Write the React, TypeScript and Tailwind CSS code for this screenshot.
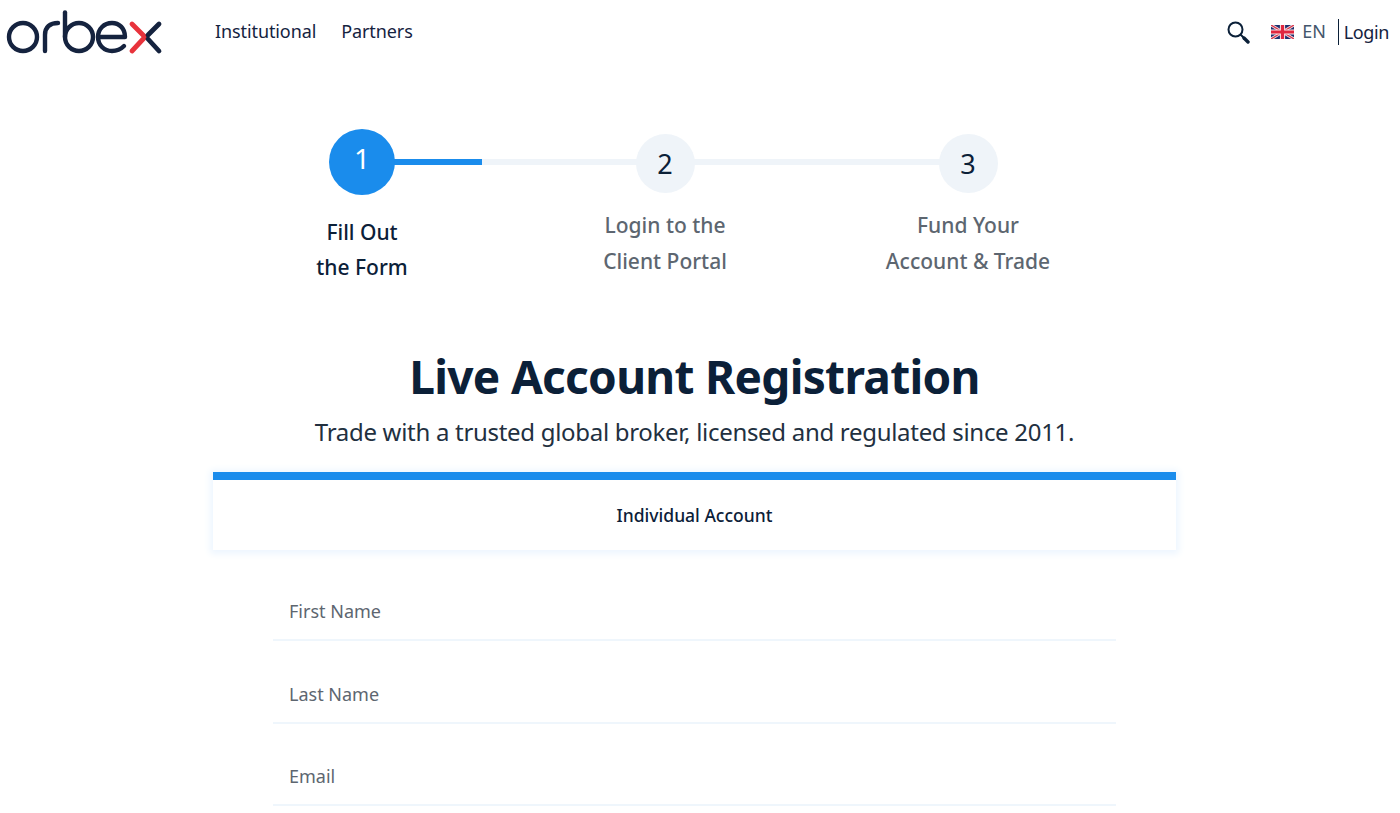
const font = { fontFamily: '"Noto Sans", sans-serif' };

function Logo() {
  return (
    <svg width="170" height="63" viewBox="0 0 170 63" fill="none" strokeWidth="4.4" strokeLinecap="round" strokeLinejoin="round">
      <circle cx="23" cy="37" r="14" stroke="#15233f" />
      <path d="M45 51V35C45 27 50 23 58 23" stroke="#15233f" />
      <path d="M65 12.5V37" stroke="#15233f" />
      <circle cx="79" cy="37" r="14" stroke="#15233f" />
      <path d="M99 37H125M125 37C125 28 119 23 112 23C104 23 98 29 98 37C98 45 104 51 112 51C117 51 121 49 124 46" stroke="#15233f" />
      <path d="M132 24L145 37L132 51" stroke="#e8333c" strokeWidth="4.8" />
      <path d="M159 24L148 35M148 39L159 51" stroke="#15233f" strokeWidth="4.8" />
    </svg>
  );
}

function Flag() {
  return (
    <svg width="23" height="14" viewBox="0 0 23 14">
      <rect width="23" height="14" fill="#1f2f6e" />
      <path d="M0 0L23 14M23 0L0 14" stroke="#f3dfe2" strokeWidth="3" />
      <path d="M0 0L23 14M23 0L0 14" stroke="#d8354a" strokeWidth="1.3" />
      <path d="M11.5 0V14M0 7H23" stroke="#f8e8ea" strokeWidth="5.2" />
      <path d="M11.5 0V14M0 7H23" stroke="#e0273f" strokeWidth="3.2" />
    </svg>
  );
}

function Search() {
  return (
    <svg width="24" height="24" viewBox="0 0 24 24" fill="none" stroke="#0b2038" strokeLinecap="round">
      <circle cx="9.5" cy="9.5" r="7" strokeWidth="2" />
      <path d="M15 15L22 22" strokeWidth="2" />
      <path d="M18 18L22 22" strokeWidth="3.4" />
    </svg>
  );
}

function Step({ n, lines, active }: { n: number; lines: string[]; active?: boolean }) {
  return (
    <div className="flex flex-1 flex-col items-center">
      <div className="flex h-[66px] items-center justify-center">
        {active ? (
          <div className="flex h-[66px] w-[66px] items-center justify-center rounded-full bg-[#1a8cec] pb-[8px] text-[28px] text-white">{n}</div>
        ) : (
          <div className="mt-[2px] flex h-[59px] w-[59px] items-center justify-center rounded-full bg-[#eff4f9] pt-[2px] text-[27px] text-[#0b2038]">{n}</div>
        )}
      </div>
      <div className={active ? "mt-[19.6px] text-center text-[21px] font-medium leading-[35.5px] text-[#0b2038]" : "mt-[13px] text-center text-[21px] font-medium leading-[35.5px] text-[#5d6670]"}>
        {lines.map((l) => (
          <div key={l}>{l}</div>
        ))}
      </div>
    </div>
  );
}

function Field({ label }: { label: string }) {
  return (
    <div className="flex h-[82.5px] items-center border-b-2 border-[#eff6fc] px-4 pt-[25px] text-[18px] text-[#5d6670]">
      {label}
    </div>
  );
}

export default function App() {
  return (
    <div style={font} className="h-[813px] overflow-hidden bg-white text-[#0b2038]">
      <header className="flex h-[63px] items-center">
        <Logo />
        <nav className="ml-[45px] flex gap-[25px] text-[18px] tracking-[-0.1px] text-[#15233f]">
          <span>Institutional</span>
          <span>Partners</span>
        </nav>
        <div className="ml-auto mr-[11px] flex items-center text-[18px] text-[#15233f]">
          <Search />
          <span className="ml-[21px]"><Flag /></span>
          <span className="ml-2 text-[#44566c]">EN</span>
          <span className="ml-3 border-l border-[#0b2038] pl-[5px] leading-[26px] tracking-[-0.4px]">Login</span>
        </div>
      </header>

      <section className="relative ml-[210.5px] mt-[66px] flex w-[909px]">
        <div className="absolute left-[151px] top-[30px] h-[6px] w-[606px] bg-[#eff4f9]">
          <div className="h-full w-[120px] bg-[#1a8cec]" />
        </div>
        <div className="relative flex flex-1">
          <Step n={1} lines={["Fill Out", "the Form"]} active />
          <Step n={2} lines={["Login to the", "Client Portal"]} />
          <Step n={3} lines={["Fund Your", "Account & Trade"]} />
        </div>
      </section>

      <main className="ml-[213px] w-[963px]">
        <h1 className="mt-[60.4px] text-center text-[46px] font-bold leading-[60px] tracking-[-0.7px] text-[#0b2038]">Live Account Registration</h1>
        <p className="mt-[8px] text-center text-[24px] leading-[36px] tracking-[-0.3px] text-[#22303f]">Trade with a trusted global broker, licensed and regulated since 2011.</p>
        <div className="mt-[22px] flex h-[78px] items-center justify-center border-t-8 border-[#1a8cec] bg-white text-[17.5px] font-medium text-[#0b2038] shadow-[0_1px_7px_3px_#edf6ff]">
          Individual Account
        </div>
        <form className="mx-[60px] mt-[9px]">
          <Field label="First Name" />
          <Field label="Last Name" />
          <Field label="Email" />
        </form>
      </main>
    </div>
  );
}
